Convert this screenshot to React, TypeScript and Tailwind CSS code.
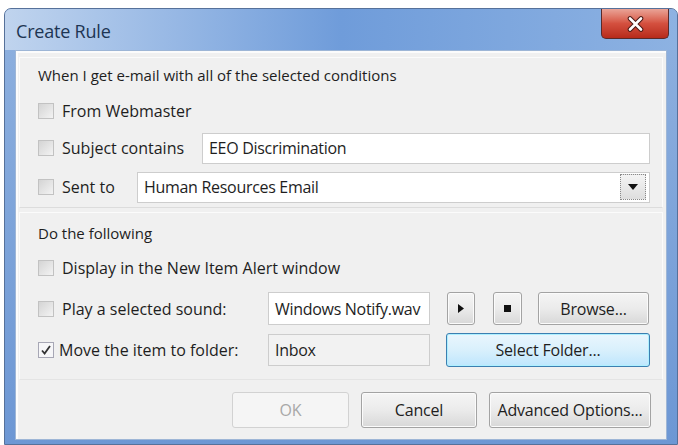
import { ReactNode } from "react";
import clsx from "clsx";

function CheckBox({ checked }: { checked?: boolean }) {
  return (
    <span
      className={clsx(
        "w-[16px] h-[16px] shrink-0 border flex items-center justify-center",
        checked
          ? "border-[#a7a7b5] bg-[#f6f6f8]"
          : "border-[#c2c2c2] bg-linear-to-br from-[#d4d4d4] to-[#f3f3f3]"
      )}
    >
      {checked && (
        <svg width="12" height="12" viewBox="0 0 12 12">
          <path d="M2 6.5 L4.6 9.5 L10 2" fill="none" stroke="#333" strokeWidth="1.8" />
        </svg>
      )}
    </span>
  );
}

function Button({
  children,
  className,
  disabled,
  focused,
}: {
  children: ReactNode;
  className?: string;
  disabled?: boolean;
  focused?: boolean;
}) {
  return (
    <div
      className={clsx(
        "flex items-center justify-center whitespace-nowrap rounded-[3px] border text-[16px] tracking-[-0.2px]",
        disabled && "border-[#d2d2d2] bg-[#f5f5f5] text-[#a8a8a8]",
        focused &&
          "border-[#3c7fb1] bg-linear-to-b from-[#eaf6fd] via-[#d9f0fc] to-[#bee6fd] text-[#1e1e1e] shadow-[inset_0_0_0_1px_#aef0ff]",
        !disabled &&
          !focused &&
          "border-[#a3a3a3] bg-linear-to-b from-[#f5f5f5] via-[#ebebeb] to-[#d8d8d8] text-[#1e1e1e] shadow-[inset_0_0_0_1px_#fbfbfb]",
        className
      )}
    >
      {children}
    </div>
  );
}

function Field({ children, className, muted }: { children?: ReactNode; className?: string; muted?: boolean }) {
  return (
    <div
      className={clsx(
        "flex items-center px-[6px] whitespace-nowrap overflow-hidden border border-[#cdcdcd] text-[16px] tracking-[-0.3px] text-[#1e1e1e]",
        muted ? "bg-[#f2f2f2]" : "bg-white",
        className
      )}
    >
      {children}
    </div>
  );
}

export default function App() {
  return (
    <div className="w-[678px] h-[445px] bg-white pt-[8px] pl-[4px] font-['Open_Sans',sans-serif] overflow-hidden">
      {/* window frame */}
      <div className="w-[674px] h-[437px] rounded-t-[7px] border border-[#56719a] bg-linear-to-b from-[#8fb1df] to-[#6d97d4] flex flex-col">
        {/* title bar */}
        <div className="h-[41px] shrink-0 flex justify-between rounded-t-[6px] bg-linear-to-r from-[#c0d4ee] via-[#6f9cda] to-[#8db2e2]">
          <div className="pl-[11px] pt-[11px] text-[18px] leading-[22px] text-[#1d3553] tracking-[-0.2px]">
            Create Rule
          </div>
          <div className="mr-[8px] w-[68px] h-[30px] rounded-b-[5px] border border-t-0 border-[#5a2a2a] bg-linear-to-b from-[#e9a397] via-[#d4503f] to-[#b72a1a] flex items-center justify-center">
            <svg width="17" height="16" viewBox="0 0 17 16">
              <path d="M3 2.5 L14 13.5 M14 2.5 L3 13.5" stroke="#4a1a16" strokeWidth="4.6" strokeLinecap="round" />
              <path d="M3 2.5 L14 13.5 M14 2.5 L3 13.5" stroke="#ffffff" strokeWidth="2.6" strokeLinecap="round" />
            </svg>
          </div>
        </div>

        {/* client area */}
        <div className="mx-[10px] mb-[4px] flex-1 bg-[#f0f0f0] border border-[#9eb6d6] shadow-[inset_2px_2px_0_#fcfcfc] flex flex-col px-[3px] pt-[6px] text-[16px] text-[#1e1e1e]">
          {/* conditions */}
          <div className="h-[151px] border border-[#fbfbfb] border-b-[#dcdcdc] pl-[18px] pr-[12px] pb-[2px]">
            <div className="h-[34px] flex items-center text-[15px]">When I get e-mail with all of the selected conditions</div>
            <div className="h-[38px] flex items-center gap-[8px]">
              <CheckBox />
              <span>From Webmaster</span>
            </div>
            <div className="h-[36px] flex items-center">
              <CheckBox />
              <span className="ml-[8px] w-[140px]">Subject contains</span>
              <Field className="flex-1 h-[31px]">EEO Discrimination</Field>
            </div>
            <div className="mt-[3px] h-[36px] flex items-center">
              <CheckBox />
              <span className="ml-[8px] w-[75px]">Sent to</span>
              <Field className="flex-1 h-[31px] pr-[3px]">
                <span className="flex-1">Human Resources Email</span>
                <span className="w-[26px] h-[26px] border border-dotted border-[#8a8a8a] bg-linear-to-b from-[#f4f4f4] to-[#dedede] flex items-center justify-center">
                  <svg width="10" height="6" viewBox="0 0 10 6">
                    <path d="M0 0 H10 L5 6 Z" fill="#111" />
                  </svg>
                </span>
              </Field>
            </div>
          </div>

          {/* actions */}
          <div className="mt-[4px] h-[168px] border border-[#fbfbfb] border-b-[#e4e4e4] pl-[18px] pr-[12px]">
            <div className="h-[40px] flex items-center text-[15px]">Do the following</div>
            <div className="h-[30px] flex items-center gap-[8px]">
              <CheckBox />
              <span>Display in the New Item Alert window</span>
            </div>
            <div className="mt-[5px] h-[41px] flex items-center">
              <CheckBox />
              <span className="ml-[8px] w-[206px]">Play a selected sound:</span>
              <Field className="w-[162px] h-[33px]">Windows Notify.wav</Field>
              <Button className="ml-[17px] w-[28px] h-[33px]">
                <svg width="6" height="9" viewBox="0 0 6 9">
                  <path d="M0 0 L6 4.5 L0 9 Z" fill="#111" />
                </svg>
              </Button>
              <Button className="ml-[18px] w-[29px] h-[33px]">
                <span className="w-[7px] h-[7px] bg-[#111]" />
              </Button>
              <Button className="ml-[16px] w-[111px] h-[33px]">Browse...</Button>
            </div>
            <div className="h-[42px] flex items-center">
              <CheckBox checked />
              <span className="ml-[5px] w-[209px]">Move the item to folder:</span>
              <Field muted className="w-[162px] h-[32px]">Inbox</Field>
              <Button focused className="ml-[16px] w-[204px] h-[34px]">Select Folder...</Button>
            </div>
          </div>

          {/* dialog buttons */}
          <div className="flex justify-end items-center gap-[12px] pr-[12px] pt-[12px]">
            <Button disabled className="w-[117px] h-[36px]">OK</Button>
            <Button className="w-[116px] h-[36px]">Cancel</Button>
            <Button className="w-[162px] h-[36px]">Advanced Options...</Button>
          </div>
        </div>
      </div>
    </div>
  );
}
